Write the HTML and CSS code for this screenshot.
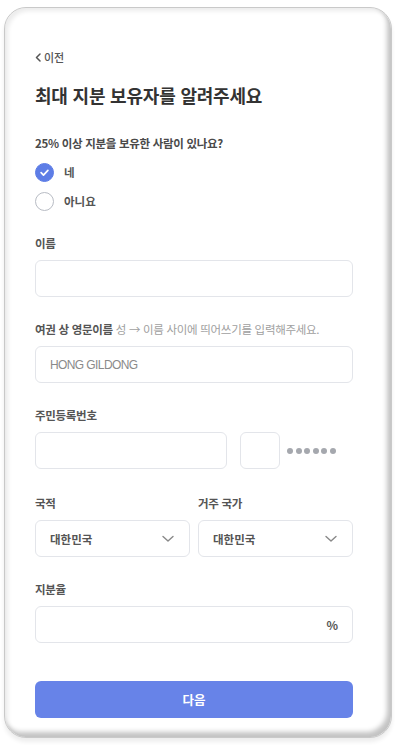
FILE: index.html
```html
<!DOCTYPE html>
<html lang="ko">
<head>
<meta charset="utf-8">
<link rel="stylesheet" href="styles.css">
</head>
<body>
<div class="phone">
  <div class="back"><svg class="back-icon" width="6" height="9" viewBox="0 0 6 9"><path d="M5 1 L1.5 4.5 L5 8" fill="none" stroke="#555" stroke-width="1.5" stroke-linecap="round" stroke-linejoin="round"/></svg><span>이전</span></div>
  <h1 class="title">최대 지분 보유자를 알려주세요</h1>

  <div class="question">25% 이상 지분을 보유한 사람이 있나요?</div>
  <div class="radios">
    <div class="radio">
      <span class="dot checked"><svg width="20" height="20" viewBox="0 0 20 20"><path d="M6 10.2 L8.8 13 L14 7.5" fill="none" stroke="#fff" stroke-width="2" stroke-linecap="round" stroke-linejoin="round"/></svg></span>
      <span class="radio-text">네</span>
    </div>
    <div class="radio">
      <span class="dot"></span>
      <span class="radio-text">아니요</span>
    </div>
  </div>

  <div class="field">
    <div class="label">이름</div>
    <div class="input"></div>
  </div>

  <div class="field">
    <div class="label">여권 상 영문이름 <span class="hint">성 → 이름 사이에 띄어쓰기를 입력해주세요.</span></div>
    <div class="input"><span class="placeholder">HONG GILDONG</span></div>
  </div>

  <div class="field">
    <div class="label">주민등록번호</div>
    <div class="rrn">
      <div class="input rrn-front"></div>
      <div class="input rrn-back"></div>
      <div class="dots"><i></i><i></i><i></i><i></i><i></i><i></i></div>
    </div>
  </div>

  <div class="field two">
    <div class="col">
      <div class="label">국적</div>
      <div class="input select"><span class="value">대한민국</span><svg width="12" height="8" viewBox="0 0 12 8"><path d="M1 1.5 L6 6 L11 1.5" fill="none" stroke="#888" stroke-width="1.4" stroke-linecap="round" stroke-linejoin="round"/></svg></div>
    </div>
    <div class="col">
      <div class="label">거주 국가</div>
      <div class="input select"><span class="value">대한민국</span><svg width="12" height="8" viewBox="0 0 12 8"><path d="M1 1.5 L6 6 L11 1.5" fill="none" stroke="#888" stroke-width="1.4" stroke-linecap="round" stroke-linejoin="round"/></svg></div>
    </div>
  </div>

  <div class="field">
    <div class="label">지분율</div>
    <div class="input pct"><span class="pct-sign">%</span></div>
  </div>

  <button class="next">다음</button>
</div>
</body>
</html>
```

FILE: styles.css
```css
* { box-sizing: border-box; }
html, body { margin: 0; padding: 0; background: #fff; }
body {
  font-family: "Noto Sans CJK KR", "Noto Sans", sans-serif;
  color: #444;
  width: 400px;
  height: 745px;
  overflow: hidden;
}
.phone {
  margin: 7px 0 0 4px;
  width: 388px;
  height: 731px;
  border: 1px solid #c9c9c9;
  border-radius: 22px;
  background: #fff;
  box-shadow: inset -4px -5px 5px rgba(0,0,0,0.24), inset 3px 3px 4px rgba(0,0,0,0.08), 0 4px 4px rgba(0,0,0,0.07);
  padding: 41px 0 0 30px;
  display: flex;
  flex-direction: column;
}
.back {
  display: flex;
  align-items: center;
  gap: 3px;
  height: 16px;
  font-size: 11px;
  color: #555;
  font-weight: 500;
}
.title {
  margin: 18px 0 0;
  font-size: 18px;
  line-height: 24px;
  height: 24px;
  font-weight: 700;
  color: #333;
  letter-spacing: -0.2px;
}
.question {
  margin-top: 27px;
  font-size: 11.5px;
  line-height: 18px;
  font-weight: 700;
  color: #4a4a4a;
  letter-spacing: -0.3px;
}
.radios {
  margin-top: 10px;
  display: flex;
  flex-direction: column;
  gap: 9px;
}
.radio {
  display: flex;
  align-items: center;
  gap: 10px;
  height: 20px;
}
.dot {
  width: 19px;
  height: 19px;
  border-radius: 50%;
  border: 1.5px solid #b8bcc4;
  display: flex;
  align-items: center;
  justify-content: center;
}
.dot.checked {
  background: #5d7de6;
  border-color: #5d7de6;
}
.dot svg { width: 17px; height: 17px; }
.radio-text {
  font-size: 11.5px;
  font-weight: 700;
  color: #555;
}
.field {
  margin-top: 23px;
  width: 318px;
}
.label {
  font-size: 11.5px;
  line-height: 18px;
  font-weight: 700;
  color: #555;
  margin-bottom: 8px;
  letter-spacing: -0.3px;
  white-space: nowrap;
}
.hint {
  font-weight: 400;
  color: #a0a0a0;
}
.input {
  height: 37px;
  border: 1px solid #e3e5ea;
  border-radius: 6px;
  background: #fff;
  display: flex;
  align-items: center;
  padding: 0 14px;
}
.placeholder {
  font-size: 12px;
  color: #8a8a8a;
  letter-spacing: -0.6px;
  font-family: "Liberation Sans", "Noto Sans", sans-serif;
}
.rrn {
  display: flex;
  align-items: center;
}
.rrn-front { width: 192px; }
.rrn-back { width: 40px; margin-left: 13px; }
.dots {
  display: flex;
  gap: 2.5px;
  margin-left: 7px;
}
.dots i {
  width: 6px;
  height: 6px;
  border-radius: 50%;
  background: #a5a8ae;
  display: block;
}
.field.two {
  display: flex;
  gap: 8px;
  margin-top: 25px;
}
.col { flex: 1; }
.select {
  justify-content: space-between;
  padding: 0 15px 0 14px;
}
.value {
  font-size: 11.5px;
  font-weight: 700;
  color: #555;
}
.pct { justify-content: flex-end; padding-right: 14px; }
.pct-sign {
  font-size: 12px;
  font-weight: 700;
  color: #555;
}
.next {
  margin-top: 38px;
  width: 318px;
  height: 37px;
  border: none;
  border-radius: 6px;
  background: #6783e8;
  color: #fff;
  font-family: "Noto Sans CJK KR", sans-serif;
  font-size: 12.5px;
  font-weight: 700;
  padding: 0;
}
```
